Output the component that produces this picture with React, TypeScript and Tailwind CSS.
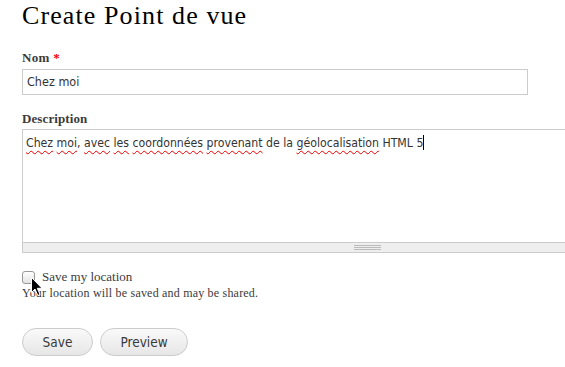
const serif = "font-['Liberation_Serif',Georgia,serif]";
const sans = "font-['DejaVu_Sans_Condensed','DejaVu_Sans',Tahoma,sans-serif]";

function Squiggle({ children }: { children: React.ReactNode }) {
  return (
    <span className="underline decoration-wavy decoration-[#e00] decoration-1 underline-offset-[3px]">
      {children}
    </span>
  );
}

export default function App() {
  return (
    <div className={`relative w-[565px] h-[367px] overflow-hidden bg-white pl-[22px] text-[#3b3b3b] ${serif}`}>
      <h1 className="text-[26px] leading-[32px] tracking-[1.1px] text-black">Create Point de vue</h1>

      {/* Nom */}
      <div className="mt-[18px]">
        <label className="block text-[13px] leading-[16px] font-bold tracking-[0.3px] mb-[3px]">
          Nom <span className="text-[#f00]">*</span>
        </label>
        <div className={`w-[506px] h-[26px] border border-[#ccc] px-[4px] flex items-center text-[12.5px] text-[#333] ${sans}`}>
          Chez moi
        </div>
      </div>

      {/* Description */}
      <div className="mt-[16px]">
        <label className="block text-[13px] leading-[16px] font-bold tracking-[0.1px] mb-[2px]">Description</label>
        <div className="w-[690px]">
          <div className={`h-[113px] border border-b-0 border-[#ccc] px-[3px] pt-[5px] text-[12.2px] leading-[15px] text-[#333] ${sans}`}>
            <Squiggle>Chez</Squiggle> <Squiggle>moi</Squiggle>, <Squiggle>avec</Squiggle> <Squiggle>les</Squiggle>{" "}
            <Squiggle>coordonnées</Squiggle> <Squiggle>provenant</Squiggle> de la <Squiggle>géolocalisation</Squiggle> HTML 5
            <span className="inline-block w-px h-[15px] bg-black align-[-3px]" />
          </div>
          <div className="h-[11px] border border-[#ccc] bg-[#eee] flex justify-center items-center">
            <div className="w-[27px] flex flex-col gap-[1px]">
              <div className="h-px bg-[#bbb]" />
              <div className="h-px bg-[#bbb]" />
              <div className="h-px bg-[#bbb]" />
            </div>
          </div>
        </div>
      </div>

      {/* Checkbox */}
      <div className="mt-[16px]">
        <label className="flex items-center gap-[7px] text-[13px] leading-[16px]">
          <span className="w-[13px] h-[13px] rounded-[3px] border border-[#999] bg-gradient-to-b from-white to-[#e4e4e4]" />
          Save my location
        </label>
        <div className="mt-[1px] text-[12px] leading-[15px] tracking-[0.2px]">Your location will be saved and may be shared.</div>
      </div>

      {/* Buttons */}
      <div className={`mt-[27px] flex gap-[7px] text-[13.5px] text-[#3a3a3a] ${sans}`}>
        <button className="w-[71px] h-[28px] rounded-full border border-[#ccc] bg-gradient-to-b from-[#fafafa] to-[#e6e6e6]">
          Save
        </button>
        <button className="w-[88px] h-[28px] rounded-full border border-[#ccc] bg-gradient-to-b from-[#fafafa] to-[#e6e6e6]">
          Preview
        </button>
      </div>

      {/* mouse pointer */}
      <svg className="absolute left-[31px] top-[277px]" width="13" height="20" viewBox="0 0 13 20">
        <path d="M0.5 0.5 L0.5 15.5 L4 12 L6.8 18.5 L9 17.5 L6.3 11.3 L11 11.3 Z" fill="#000" stroke="#fff" strokeWidth="1" />
      </svg>
    </div>
  );
}
